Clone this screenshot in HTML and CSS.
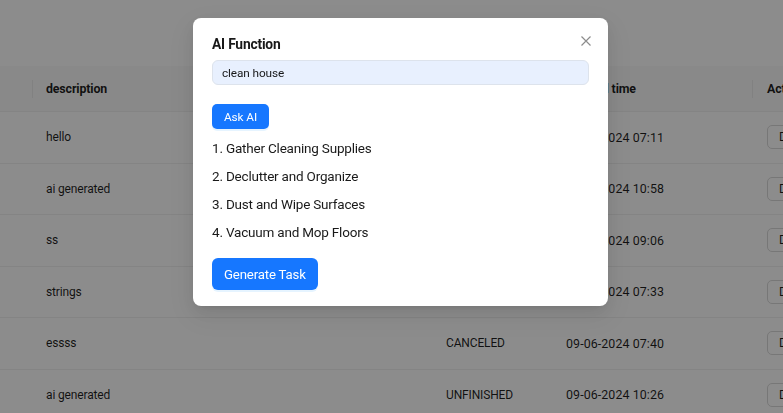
FILE: index.html
```html
<!DOCTYPE html>
<html lang="en">
<head>
<meta charset="utf-8">
<title>Tasks</title>
<link rel="stylesheet" href="styles.css">
</head>
<body>
<div class="page">
  <div class="table">
    <div class="row head">
      <div class="cell"></div>
      <div class="cell">description</div>
      <div class="cell">status</div>
      <div class="cell">Created time</div>
      <div class="cell act">Actions</div>
    </div>
    <div class="row">
      <div class="cell"></div>
      <div class="cell">hello</div>
      <div class="cell caps">FINISHED</div>
      <div class="cell time">09-06-2024 07:11</div>
      <div class="cell act"><button class="btn-del">Delete</button></div>
    </div>
    <div class="row">
      <div class="cell"></div>
      <div class="cell">ai generated</div>
      <div class="cell caps">UNFINISHED</div>
      <div class="cell time">09-06-2024 10:58</div>
      <div class="cell act"><button class="btn-del">Delete</button></div>
    </div>
    <div class="row">
      <div class="cell"></div>
      <div class="cell">ss</div>
      <div class="cell caps">FINISHED</div>
      <div class="cell time">09-06-2024 09:06</div>
      <div class="cell act"><button class="btn-del">Delete</button></div>
    </div>
    <div class="row">
      <div class="cell"></div>
      <div class="cell">strings</div>
      <div class="cell caps">UNFINISHED</div>
      <div class="cell time">09-06-2024 07:33</div>
      <div class="cell act"><button class="btn-del">Delete</button></div>
    </div>
    <div class="row">
      <div class="cell"></div>
      <div class="cell">essss</div>
      <div class="cell caps">CANCELED</div>
      <div class="cell time">09-06-2024 07:40</div>
      <div class="cell act"><button class="btn-del">Delete</button></div>
    </div>
    <div class="row">
      <div class="cell"></div>
      <div class="cell">ai generated</div>
      <div class="cell caps">UNFINISHED</div>
      <div class="cell time">09-06-2024 10:26</div>
      <div class="cell act"><button class="btn-del">Delete</button></div>
    </div>
  </div>
</div>

<div class="mask"></div>

<div class="modal">
  <svg class="close" viewBox="0 0 10 10" aria-label="Close">
    <path d="M0.5 0.5 L9.5 9.5 M9.5 0.5 L0.5 9.5" />
  </svg>
  <h2 class="modal-title">AI Function</h2>
  <input class="input" type="text" value="clean house">
  <button class="btn-primary ask">Ask AI</button>
  <ul class="steps">
    <li>1. Gather Cleaning Supplies</li>
    <li>2. Declutter and Organize</li>
    <li>3. Dust and Wipe Surfaces</li>
    <li>4. Vacuum and Mop Floors</li>
  </ul>
  <button class="btn-primary gen">Generate Task</button>
</div>
</body>
</html>
```

FILE: styles.css
```css
* {
  box-sizing: border-box;
}

html,
body {
  margin: 0;
  height: 100%;
}

body {
  font-family: Roboto, "Liberation Sans", sans-serif;
  color: rgba(0, 0, 0, 0.88);
  background: #ffffff;
  overflow: hidden;
}

.page {
  padding-top: 66px;
}

.table {
  width: 873px;
}

.row {
  display: grid;
  grid-template-columns: 33px 400px 120px 200px 120px;
  height: 51.5px;
  align-items: center;
  border-bottom: 1px solid #f0f0f0;
  font-size: 12px;
  letter-spacing: -0.15px;
}

.row.head {
  height: 46px;
  background: #fafafa;
  font-weight: 700;
  font-size: 12.4px;
}

.cell {
  padding: 0 13px;
  white-space: nowrap;
  overflow: hidden;
}

.head .cell {
  position: relative;
  overflow: visible;
}

.head .cell:not(:last-child)::before {
  content: "";
  position: absolute;
  right: 0;
  top: 50%;
  width: 1px;
  height: 18px;
  margin-top: -9px;
  background: #ececec;
}

.cell.act {
  padding-left: 14px;
}

.time {
  font-size: 12.4px;
  letter-spacing: 0.1px;
}

.btn-del {
  height: 24px;
  padding: 0 11px;
  border: 1px solid #d9d9d9;
  border-radius: 5px;
  background: #ffffff;
  font-family: inherit;
  font-size: 12px;
  color: rgba(0, 0, 0, 0.88);
}

.mask {
  position: fixed;
  inset: 0;
  background: rgba(0, 0, 0, 0.45);
}

.modal {
  position: fixed;
  left: 193px;
  top: 18px;
  width: 415px;
  background: #ffffff;
  border-radius: 8px;
  padding: 15px 19px 16px;
  color: rgba(0, 0, 0, 0.9);
  box-shadow: 0 6px 16px 0 rgba(0, 0, 0, 0.08),
    0 3px 6px -4px rgba(0, 0, 0, 0.12),
    0 9px 28px 8px rgba(0, 0, 0, 0.05);
}

.close {
  position: absolute;
  top: 18px;
  right: 17px;
  width: 10px;
  height: 10px;
  fill: none;
  stroke: rgba(0, 0, 0, 0.45);
  stroke-width: 1.2;
}

.modal-title {
  margin: 0;
  font-size: 13.8px;
  font-weight: 700;
  letter-spacing: -0.2px;
  line-height: 22px;
}

.input {
  display: block;
  width: 377px;
  height: 25px;
  margin: 5px 0 0;
  padding: 0 9px;
  background: #e8f0fe;
  border: 1px solid #dde3ec;
  border-radius: 6px;
  font-family: inherit;
  font-size: 11.8px;
  letter-spacing: -0.1px;
  color: rgba(0, 0, 0, 0.9);
  outline: none;
}

.btn-primary {
  display: block;
  background: #1677ff;
  color: #ffffff;
  border: none;
  border-radius: 5px;
  font-family: inherit;
  box-shadow: 0 2px 0 rgba(5, 145, 255, 0.1);
}

.ask {
  height: 25px;
  margin-top: 19px;
  padding: 0 12px;
  font-size: 11.8px;
  letter-spacing: -0.1px;
}

.steps {
  margin: 5px 0 0;
  padding: 0;
  list-style: none;
  font-size: 13.5px;
  letter-spacing: -0.2px;
  line-height: 28px;
}

.gen {
  height: 32px;
  margin-top: 12px;
  padding: 0 12px;
  font-size: 13.2px;
  letter-spacing: -0.15px;
  border-radius: 6px;
}
```
